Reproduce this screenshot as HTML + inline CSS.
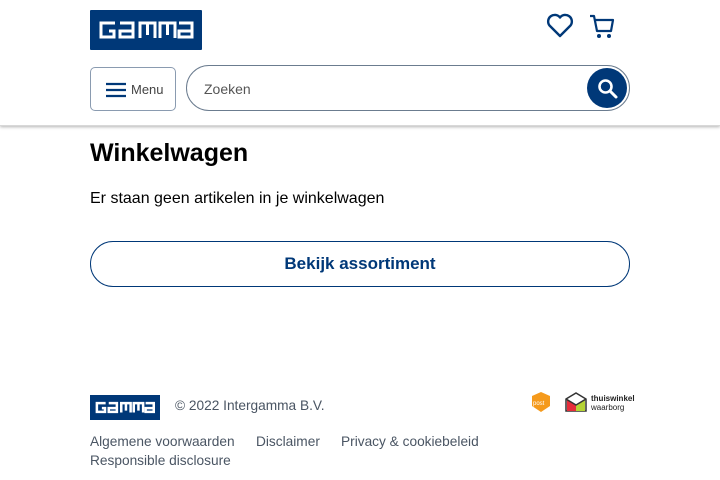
<!DOCTYPE html>
<html><head><meta charset="utf-8"><style>
*{margin:0;padding:0;box-sizing:border-box}
body{width:720px;height:480px;background:#fff;font-family:"Liberation Sans",sans-serif;position:relative;overflow:hidden;color:#000}
.hdr{position:absolute;left:0;top:0;width:720px;height:126px;background:#fff;box-shadow:0 1px 3px rgba(0,0,0,.3);border-bottom:1px solid #d8d8d8}
.abs{position:absolute}
.menu{left:90px;top:67px;width:86px;height:44px;border:1px solid #8a9bb0;border-radius:5px;font-size:13px;color:#444}
.search{left:186px;top:65px;width:444px;height:46px;border:1px solid #6b7c8f;border-radius:23px}
.btn{left:90px;top:241px;width:540px;height:46px;border:1px solid #003878;border-radius:23px;text-align:center;line-height:44px;font-weight:bold;font-size:17px;color:#003878}
.ft{font-size:13.7px;color:#4a5563}
</style></head><body>
<div class="hdr">
<svg class="abs" style="left:90px;top:10px" width="112" height="40" viewBox="0 0 112 40">
<rect width="112" height="40" rx="1" fill="#003878"/>
<g fill="none" stroke="#fff" stroke-width="3">
<path d="M25 13H11V27H24V21H19"/>
<path d="M30 13H43V27H30V21H43"/>
<path d="M50 28V13H65V28M57.5 13V25"/>
<path d="M70 28V13H85V28M77.5 13V25"/>
<path d="M89 13H102V27H89V21H102"/>
</g></svg>
<svg class="abs" style="left:546px;top:13px" width="28" height="26" viewBox="0 0 28 26"><path d="M14 23L3.5 12.5A6 6 0 0 1 14 4.5A6 6 0 0 1 24.5 12.5Z" fill="none" stroke="#003878" stroke-width="2.4" stroke-linejoin="round"/></svg>
<svg class="abs" style="left:589px;top:14px" width="28" height="26" viewBox="0 0 28 26"><path d="M1 2H5L8 17H22L24 6H6" fill="none" stroke="#003878" stroke-width="2.2" stroke-linejoin="round"/><circle cx="10" cy="22" r="2" fill="#003878"/><circle cx="20" cy="22" r="2" fill="#003878"/></svg>
<div class="abs menu"><svg class="abs" style="left:14px;top:13px" width="22" height="18"><path d="M1 3H21M1 9H21M1 15H21" stroke="#003878" stroke-width="2.2"/></svg><span class="abs" style="left:40px;top:14px">Menu</span></div>
<div class="abs search"><span class="abs" style="left:17px;top:15px;font-size:14px;color:#555">Zoeken</span>
<div class="abs" style="left:400px;top:2px;width:40px;height:40px;border-radius:50%;background:#003878"><svg class="abs" style="left:10px;top:10px" width="22" height="22"><circle cx="8.5" cy="8.5" r="6" fill="none" stroke="#fff" stroke-width="2.6"/><path d="M13 13L19 19" stroke="#fff" stroke-width="3" stroke-linecap="round"/></svg></div></div>
</div>
<div class="abs" style="left:90px;top:139px;font-size:25px;font-weight:bold">Winkelwagen</div>
<div class="abs" style="left:90px;top:190px;font-size:16px">Er staan geen artikelen in je winkelwagen</div>
<div class="abs btn">Bekijk assortiment</div>
<svg class="abs" style="left:90px;top:395px" width="70" height="25" viewBox="0 0 112 40">
<rect width="112" height="40" fill="#003878"/>
<g fill="none" stroke="#fff" stroke-width="4">
<path d="M25 13H11V27H24V21H19"/><path d="M30 13H43V27H30V21H43"/><path d="M50 28V13H65V28M57.5 13V25"/><path d="M70 28V13H85V28M77.5 13V25"/><path d="M89 13H102V27H89V21H102"/></g></svg>
<div class="abs ft" style="left:175px;top:398px">© 2022 Intergamma B.V.</div>
<svg class="abs" style="left:530px;top:391px" width="22" height="22"><path d="M11 1L20 5V15L11 21L2 15V5Z" fill="#f59a1c"/><text x="3" y="14" font-size="6" fill="#fff" font-family="Liberation Sans">post</text></svg>
<svg class="abs" style="left:564px;top:391px" width="24" height="22"><path d="M2 8L12 2L22 8V20H2Z" fill="#fff" stroke="#333" stroke-width="1.5"/><path d="M3 9L12 14V20H3Z" fill="#e52d3a"/><path d="M21 9L12 14V20H21Z" fill="#b5d334"/><path d="M2 8L12 14L22 8" fill="none" stroke="#333" stroke-width="1.5"/></svg>
<div class="abs" style="left:591px;top:394px;font-size:8px;line-height:9px;color:#222"><b>thuiswinkel</b><br>waarborg</div>
<div class="abs ft" style="left:90px;top:434px">Algemene voorwaarden</div>
<div class="abs ft" style="left:256px;top:434px">Disclaimer</div>
<div class="abs ft" style="left:341px;top:434px">Privacy &amp; cookiebeleid</div>
<div class="abs ft" style="left:90px;top:453px">Responsible disclosure</div>
</body></html>
